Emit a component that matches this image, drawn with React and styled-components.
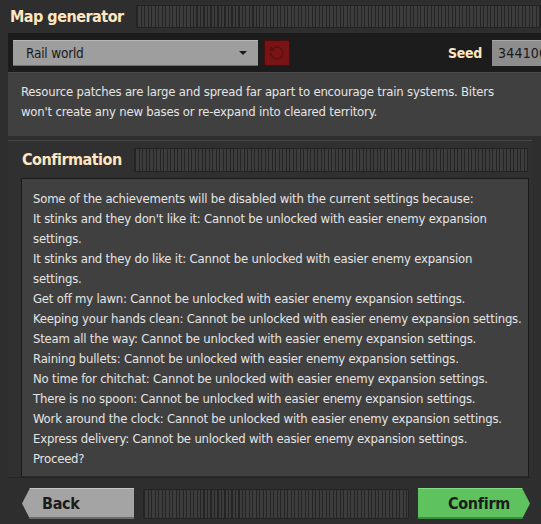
import React from 'react';
import styled, { createGlobalStyle } from 'styled-components';
import { RotateCcw } from 'lucide-react';

const FONT = `"DejaVu Sans Condensed", "Liberation Sans", sans-serif`;

const GlobalStyle = createGlobalStyle`
  html, body {
    margin: 0;
    padding: 0;
    background: #2e2d2d;
  }
  body {
    font-family: ${FONT};
  }
`;

const Window = styled.div`
  width: 541px;
  height: 524px;
  overflow: hidden;
  background: #2f2e2e;
  display: flex;
  flex-direction: column;
`;

const TitleBar = styled.div`
  display: flex;
  align-items: center;
  height: ${({ $h }) => $h || 33}px;
  gap: 12px;
  padding: 0 ${({ $right }) => $right || 0}px 0 ${({ $left }) => $left}px;
  flex-shrink: 0;
`;

const Title = styled.h1`
  margin: 0;
  font: bold 16px ${FONT};
  letter-spacing: -0.5px;
  color: #ffe6c0;
  white-space: nowrap;
`;

const Dragger = styled.div`
  flex: 1;
  height: ${({ $h }) => $h || 23}px;
  box-sizing: border-box;
  border: 1px solid #242323;
  background: repeating-linear-gradient(90deg, #262525 0 1px, #3d3c3c 1px 3.5px);
`;

const InsetFrame = styled.div`
  margin-left: 8px;
  background: #1d1c1c;
  display: flex;
  flex-direction: column;
`;

const Toolbar = styled.div`
  display: flex;
  align-items: center;
  height: 39px;
  padding: 0 0 0 5px;
  gap: 6px;
`;

const Dropdown = styled.div`
  width: 245px;
  height: 26px;
  box-sizing: border-box;
  background: #9e9e9e;
  border-top: 1px solid #b8b8b8;
  border-bottom: 1px solid #6e6e6e;
  display: flex;
  align-items: center;
  justify-content: space-between;
  padding: 0 11px 0 13px;
  font-size: 13.5px;
  letter-spacing: -0.2px;
  color: #1a1a1a;
`;

const Caret = styled.span`
  width: 0;
  height: 0;
  border-left: 4px solid transparent;
  border-right: 4px solid transparent;
  border-top: 4px solid #1a1a1a;
`;

const RedButton = styled.div`
  width: 26px;
  height: 26px;
  box-sizing: border-box;
  background: #7a1414;
  border: 1px solid #4a0c0c;
  display: flex;
  align-items: center;
  justify-content: center;
  color: #5c1010;
`;

const Spacer = styled.div`
  flex: 1;
`;

const SeedLabel = styled.span`
  font: bold 14px ${FONT};
  letter-spacing: -0.3px;
  color: #ffe6c0;
  margin-right: 4px;
`;

const SeedBox = styled.div`
  width: 80px;
  margin-right: -31px;
  flex-shrink: 0;
  height: 26px;
  box-sizing: border-box;
  background: #8d8d8d;
  border-top: 1px solid #a8a8a8;
  padding-left: 6px;
  display: flex;
  align-items: center;
  font-size: 14px;
  color: #1a1a1a;
  letter-spacing: 0.2px;
`;

const Description = styled.div`
  height: 64px;
  box-sizing: border-box;
  background: #414040;
  border-top: 1px solid #4c4b4b;
  padding: 9px 10px 0 13px;
  font-size: 13px;
  letter-spacing: -0.2px;
  line-height: 20px;
  color: #e4e4e4;
  white-space: nowrap;
`;

const Frame = styled.div`
  margin: 4px 0 0 8px;
  width: 524px;
  height: 338px;
  box-sizing: border-box;
  background: #313030;
  border-top: 1px solid #484747;
  border-bottom: 1px solid #262525;
  display: flex;
  flex-direction: column;
  flex-shrink: 0;
`;

const MessageBox = styled.div`
  margin-left: 13px;
  width: 508px;
  height: 299px;
  box-sizing: border-box;
  background: #414040;
  border: 1px solid #1b1a1a;
  border-bottom-color: #2a2929;
  padding: 10px 6px 0 11px;
  font-size: 13px;
  letter-spacing: -0.2px;
  line-height: 20px;
  color: #e4e4e4;
`;

const Line = styled.div`
  white-space: nowrap;
`;

const ButtonRow = styled.div`
  display: flex;
  align-items: center;
  height: 31px;
  margin-top: 10px;
  padding-left: 22px;
  gap: 9px;
  width: 508px;
`;

const NavButton = styled.button`
  all: unset;
  box-sizing: border-box;
  width: 112px;
  height: 31px;
  display: flex;
  align-items: center;
  font: bold 16px ${FONT};
  letter-spacing: -0.3px;
  color: #1c1c1c;
  background: ${({ $primary }) => ($primary ? '#5ec25e' : '#a4a4a4')};
  border-top: 1px solid ${({ $primary }) => ($primary ? '#86dc86' : '#c4c4c4')};
  border-bottom: 2px solid ${({ $primary }) => ($primary ? '#3c8e3c' : '#6c6c6c')};
  clip-path: ${({ $primary }) =>
    $primary
      ? 'polygon(0 0, calc(100% - 8px) 0, 100% 50%, calc(100% - 8px) 100%, 0 100%)'
      : 'polygon(8px 0, 100% 0, 100% 100%, 8px 100%, 0 50%)'};
  padding: ${({ $primary }) => ($primary ? '0 0 0 30px' : '0 0 0 20px')};
`;

const lines = [
  'Some of the achievements will be disabled with the current settings because:',
  "It stinks and they don't like it: Cannot be unlocked with easier enemy expansion",
  'settings.',
  'It stinks and they do like it: Cannot be unlocked with easier enemy expansion',
  'settings.',
  'Get off my lawn: Cannot be unlocked with easier enemy expansion settings.',
  'Keeping your hands clean: Cannot be unlocked with easier enemy expansion settings.',
  'Steam all the way: Cannot be unlocked with easier enemy expansion settings.',
  'Raining bullets: Cannot be unlocked with easier enemy expansion settings.',
  'No time for chitchat: Cannot be unlocked with easier enemy expansion settings.',
  'There is no spoon: Cannot be unlocked with easier enemy expansion settings.',
  'Work around the clock: Cannot be unlocked with easier enemy expansion settings.',
  'Express delivery: Cannot be unlocked with easier enemy expansion settings.',
  'Proceed?',
];

export default function App() {
  return (
    <Window>
      <GlobalStyle />
      <TitleBar $left={10}>
        <Title>Map generator</Title>
        <Dragger />
      </TitleBar>

      <InsetFrame>
        <Toolbar>
          <Dropdown>
            Rail world
            <Caret />
          </Dropdown>
          <RedButton>
            <RotateCcw size={16} strokeWidth={2} />
          </RedButton>
          <Spacer />
          <SeedLabel>Seed</SeedLabel>
          <SeedBox>344100</SeedBox>
        </Toolbar>
        <Description>
          Resource patches are large and spread far apart to encourage train systems. Biters
          <br />
          won't create any new bases or re-expand into cleared territory.
        </Description>
      </InsetFrame>

      <Frame>
        <TitleBar $left={14} $right={4} $h={37}>
          <Title>Confirmation</Title>
          <Dragger $h={24} />
        </TitleBar>
        <MessageBox>
          {lines.map((l, i) => (
            <Line key={i}>{l}</Line>
          ))}
        </MessageBox>
      </Frame>

      <ButtonRow>
        <NavButton>Back</NavButton>
        <Dragger $h={30} />
        <NavButton $primary>Confirm</NavButton>
      </ButtonRow>
    </Window>
  );
}
